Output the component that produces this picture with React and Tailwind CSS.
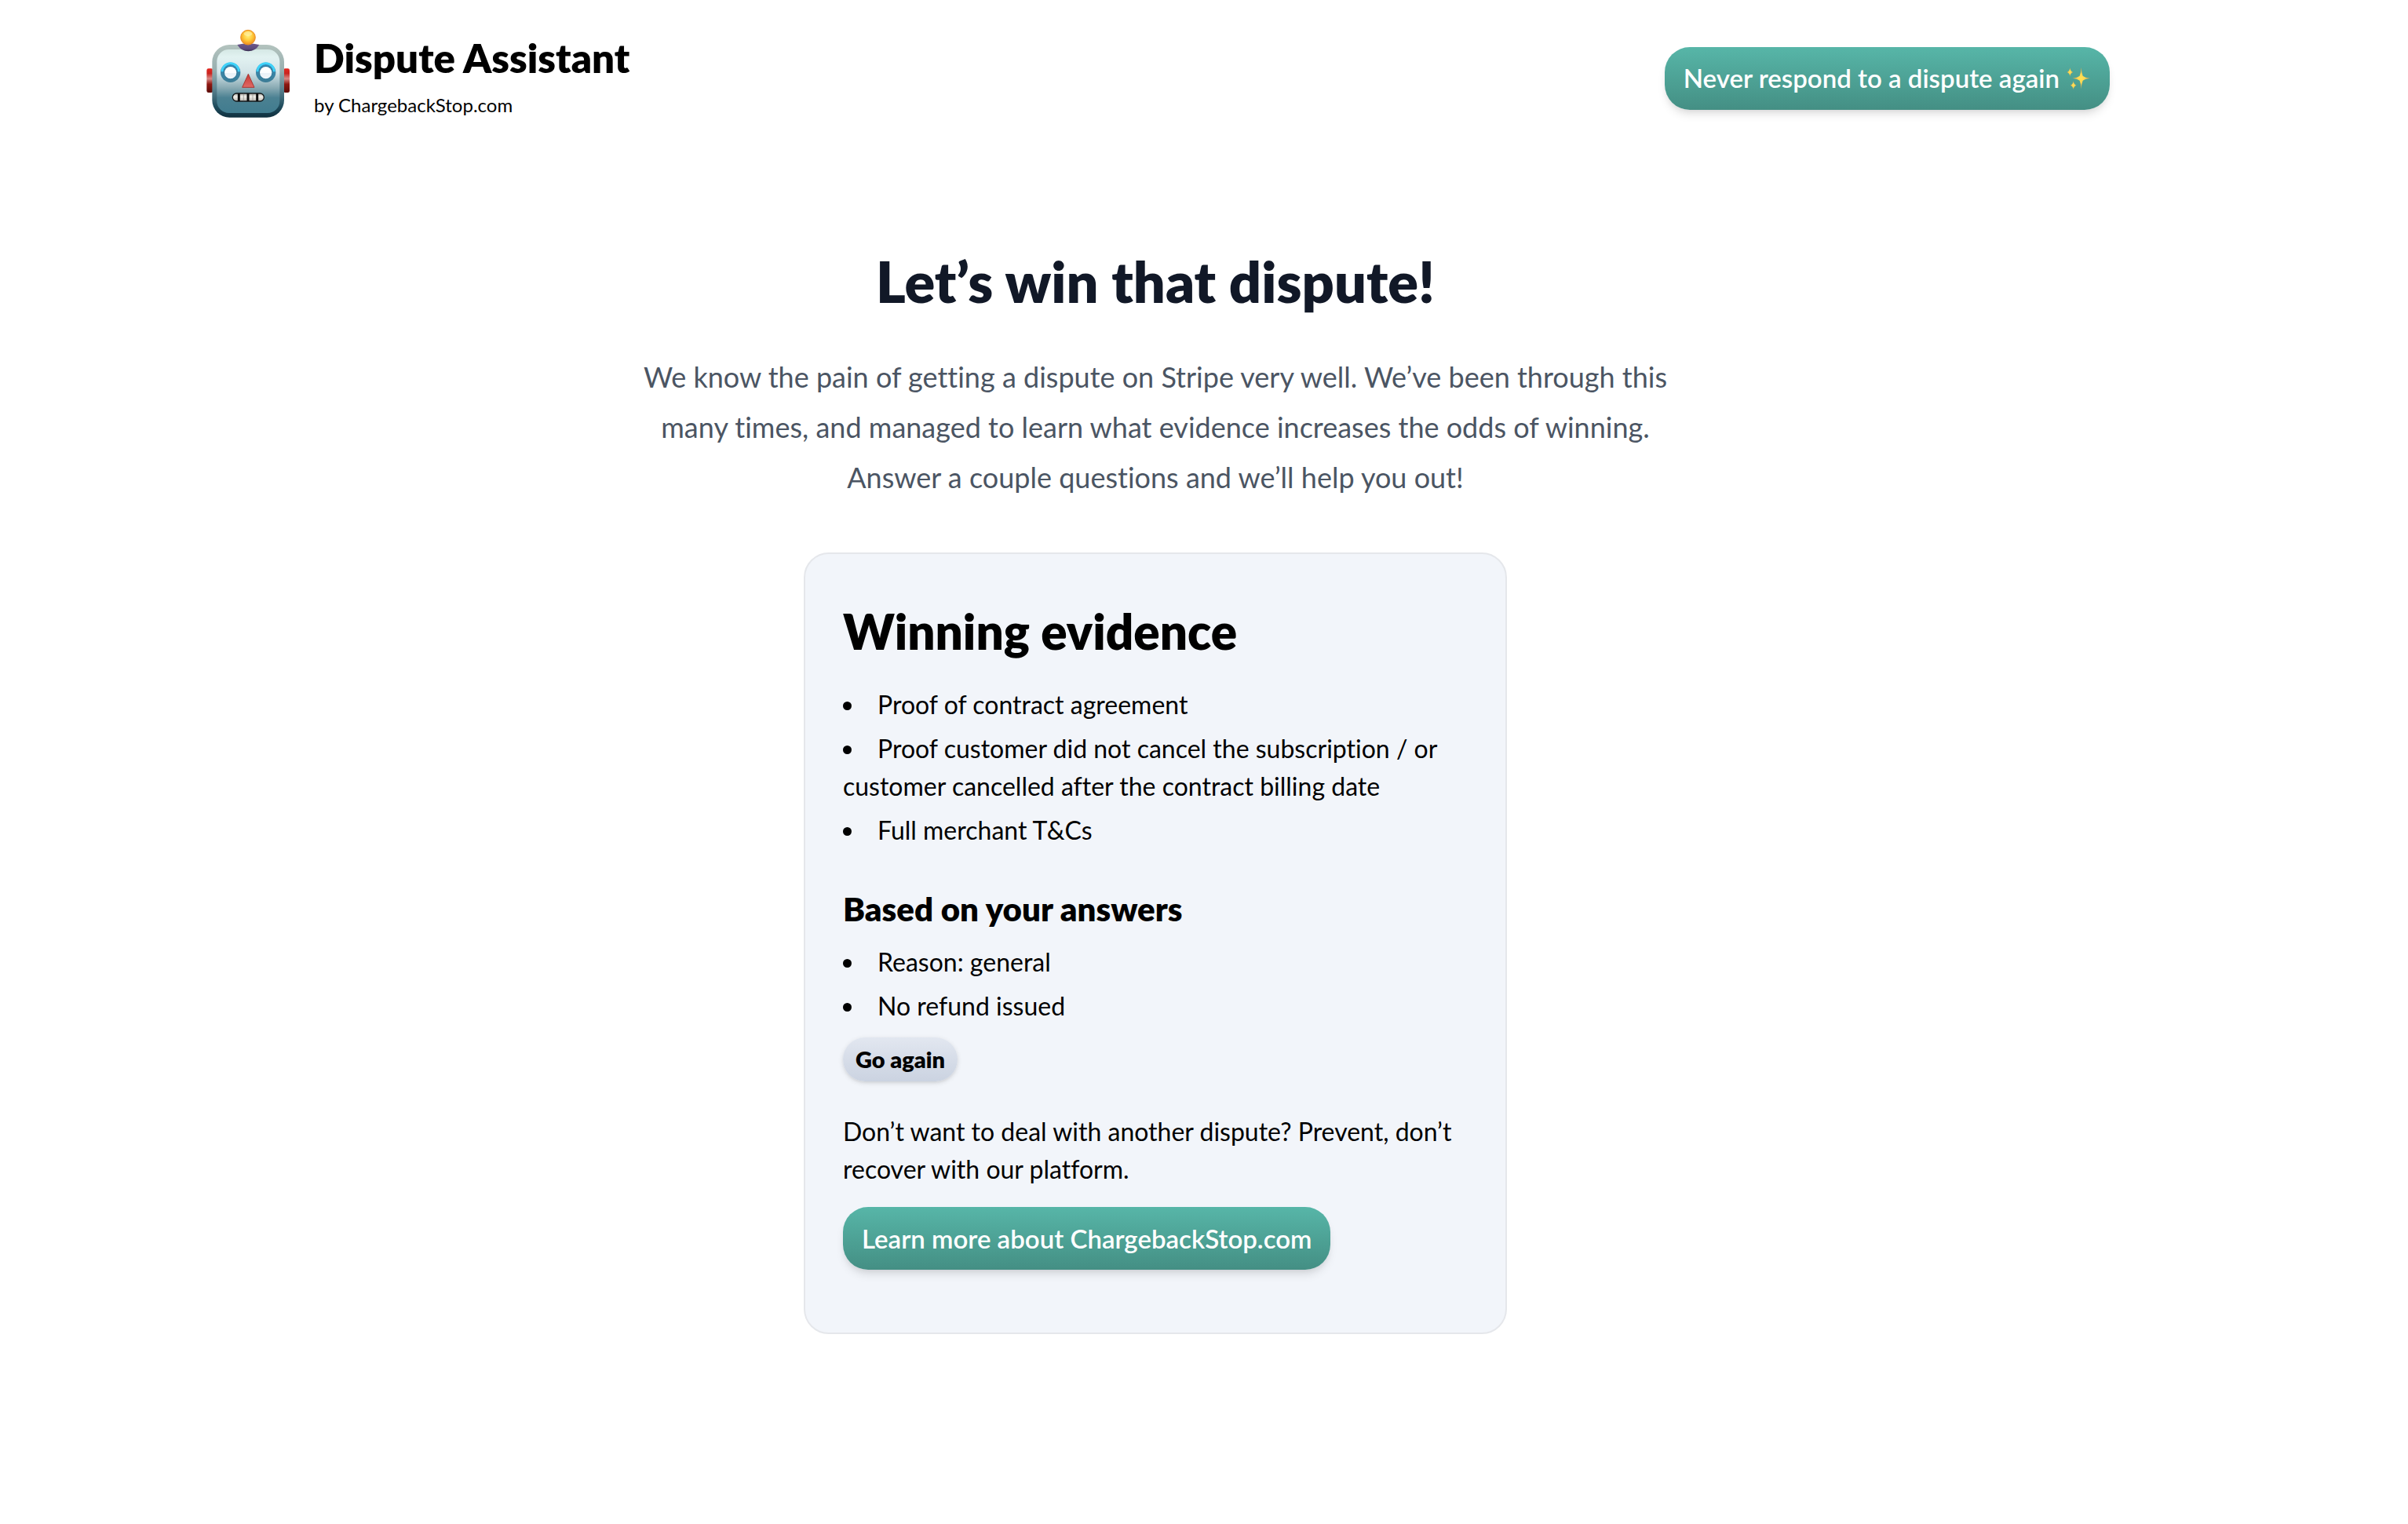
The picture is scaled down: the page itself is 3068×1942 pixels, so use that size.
import React from 'react';

const RobotLogo = () => (
  <svg viewBox="18 48 360 360" className="w-[120px] h-[120px] shrink-0" aria-hidden="true">
    <defs>
      <linearGradient id="shell" x1="0" y1="0" x2="0" y2="1">
        <stop offset="0" stopColor="#b3c3be" />
        <stop offset="0.35" stopColor="#98afb0" />
        <stop offset="0.6" stopColor="#5c8491" />
        <stop offset="0.85" stopColor="#1f4c5d" />
        <stop offset="1" stopColor="#0f2f3e" />
      </linearGradient>
      <linearGradient id="face" x1="0" y1="0" x2="0" y2="1">
        <stop offset="0" stopColor="#d5e8e5" />
        <stop offset="0.12" stopColor="#e2f2f1" />
        <stop offset="0.36" stopColor="#d3e4e8" />
        <stop offset="0.6" stopColor="#8aabb4" />
        <stop offset="0.76" stopColor="#4b8192" />
        <stop offset="1" stopColor="#417c8f" />
      </linearGradient>
      <radialGradient id="bulb" cx="0.5" cy="0.4" r="0.6">
        <stop offset="0" stopColor="#fff07a" />
        <stop offset="0.5" stopColor="#ffcb3c" />
        <stop offset="1" stopColor="#ef8d1c" />
      </radialGradient>
      <linearGradient id="cap" x1="0" y1="0" x2="0" y2="1">
        <stop offset="0" stopColor="#6d5a8d" />
        <stop offset="0.7" stopColor="#5b4a7a" />
        <stop offset="1" stopColor="#352a4d" />
      </linearGradient>
      <linearGradient id="ear" x1="0" y1="0" x2="0" y2="1">
        <stop offset="0" stopColor="#e3261f" />
        <stop offset="0.2" stopColor="#c9241f" />
        <stop offset="0.42" stopColor="#d88a86" />
        <stop offset="0.65" stopColor="#8f1711" />
        <stop offset="1" stopColor="#5b0c07" />
      </linearGradient>
      <linearGradient id="ring" x1="0" y1="0" x2="0" y2="1">
        <stop offset="0" stopColor="#2f8fc0" />
        <stop offset="0.48" stopColor="#3a86a8" />
        <stop offset="1" stopColor="#3d7c95" />
      </linearGradient>
      <linearGradient id="lens" x1="0" y1="0" x2="0" y2="1">
        <stop offset="0" stopColor="#ffffff" />
        <stop offset="0.5" stopColor="#fbfdff" />
        <stop offset="0.55" stopColor="#eaf2f8" />
        <stop offset="1" stopColor="#f1f6fa" />
      </linearGradient>
      <linearGradient id="nose" x1="0" y1="0" x2="0" y2="1">
        <stop offset="0" stopColor="#c73732" />
        <stop offset="1" stopColor="#e06a66" />
      </linearGradient>
      <linearGradient id="teeth" x1="0" y1="0" x2="0" y2="1">
        <stop offset="0" stopColor="#a5a39d" />
        <stop offset="0.4" stopColor="#f2f0ea" />
        <stop offset="1" stopColor="#b8b5ae" />
      </linearGradient>
    </defs>
    <rect x="40" y="202" width="24" height="92" rx="7" fill="url(#ear)" />
    <rect x="333" y="202" width="24" height="92" rx="7" fill="url(#ear)" />
    <rect x="61" y="111" width="275" height="278" rx="66" fill="url(#shell)" />
    <rect x="79" y="129" width="240" height="243" rx="46" fill="url(#face)" />
    <path d="M157 111 Q198 101 241 111 Q226 136 199 136 Q172 136 157 111Z" fill="url(#cap)" />
    <circle cx="198" cy="83" r="28" fill="url(#bulb)" stroke="#ec8f22" strokeWidth="3" />
    <ellipse cx="198" cy="69" rx="16" ry="9" fill="#fff3b0" opacity="0.6" />
    {[131, 266].map((cx) => (
      <g key={cx}>
        <circle cx={cx} cy="217" r="38" fill="url(#ring)" />
        <path d={`M${cx - 32} 214 A32 32 0 0 1 ${cx + 32} 214`} fill="none" stroke="#3fd3fa" strokeWidth="8" />
        <circle cx={cx} cy="218" r="26" fill="#33799a" />
        <circle cx={cx} cy="218" r="23" fill="url(#lens)" />
      </g>
    ))}
    <path d="M199 223 L222 274 H176Z" fill="url(#nose)" stroke="#a83834" strokeWidth="3" strokeLinejoin="round" />
    <rect x="139" y="297" width="120" height="30" rx="15" fill="url(#teeth)" stroke="#15191b" strokeWidth="4" />
    <path d="M163 297V327M198 297V327M233 297V327" stroke="#0d0d0d" strokeWidth="9" />
    <path d="M181 299V325M216 299V325" stroke="#8b8983" strokeWidth="2" />
  </svg>
);

const Sparkles = () => (
  <svg viewBox="38 22 96 96" className="w-8 h-8 shrink-0" aria-hidden="true">
    <defs>
      <radialGradient id="spark">
        <stop offset="0" stopColor="#ffe352" />
        <stop offset="0.4" stopColor="#fcd654" />
        <stop offset="1" stopColor="#d99a45" />
      </radialGradient>
    </defs>
    <g fill="url(#spark)">
      <path d="M97 27 Q98 48 103 60 Q112 67 131 69 Q112 71 103 78 Q98 90 97 111 Q96 90 91 78 Q82 71 63 69 Q82 67 91 60 Q96 48 97 27Z" />
      <path d="M54 28 Q55 43 66 46 Q55 49 54 63 Q53 49 42 46 Q53 43 54 28Z" />
      <path d="M67 79 Q68 93 79 96 Q68 99 67 113 Q66 99 55 96 Q66 93 67 79Z" />
    </g>
  </svg>
);

const CtaLink = ({ href, children }) => (
  <a
    href={href}
    className="inline-flex items-center gap-2 h-20 px-6 rounded-[32px] bg-gradient-to-b from-[#57b6a8] to-[#448f84] text-white text-[33px] font-semibold whitespace-nowrap shadow-[0_8px_12px_-2px_rgba(0,0,0,0.1),0_4px_8px_-4px_rgba(0,0,0,0.1)]"
  >
    {children}
  </a>
);

const evidence = [
  'Proof of contract agreement',
  'Proof customer did not cancel the subscription / or customer cancelled after the contract billing date',
  'Full merchant T&Cs',
];

const answers = ['Reason: general', 'No refund issued'];

const BulletList = ({ items }) => (
  <ul className="list-disc list-inside space-y-2">
    {items.map((item) => (
      <li key={item}>{item}</li>
    ))}
  </ul>
);

export default function App() {
  return (
    <div className="min-h-screen bg-white pr-[124px] pb-20 font-['Lato',sans-serif] [font-variant-ligatures:none] text-black">
      <div className="max-w-[2560px] mx-auto px-16">
        <header className="flex items-start justify-between pt-9">
          <div className="flex items-center gap-6">
            <RobotLogo />
            <div className="flex flex-col gap-3">
              <p className="text-[51px] leading-[64px] font-extrabold">Dispute Assistant</p>
              <p className="text-2xl leading-8">by ChargebackStop.com</p>
            </div>
          </div>
          <div className="pt-6">
            <CtaLink href="#prevent">
              Never respond to a dispute again
              <Sparkles />
            </CtaLink>
          </div>
        </header>

        <main className="pt-40">
          <div className="max-w-[1344px] mx-auto text-center">
            <h1 className="text-7xl leading-[84px] font-extrabold text-[#111827]">Let’s win that dispute!</h1>
            <p className="mt-12 text-4xl leading-[64px] text-[#4b5563]">
              We know the pain of getting a dispute on Stripe very well. We’ve been through this many times, and managed to
              learn what evidence increases the odds of winning. Answer a couple questions and we’ll help you out!
            </p>
          </div>

          <section className="max-w-4xl mx-auto mt-16 px-12 pt-3 pb-20 rounded-[32px] border-2 border-gray-200 bg-[#f2f5fa] text-[32px] leading-[48px]">
            <h2 className="pt-12 text-[62px] leading-[76px] font-extrabold">Winning evidence</h2>
            <div className="mt-8">
              <BulletList items={evidence} />
            </div>
            <h3 className="mt-12 mb-4 text-[42px] leading-[56px] font-extrabold">Based on your answers</h3>
            <BulletList items={answers} />
            <button
              type="button"
              className="block mt-4 h-14 px-4 rounded-[28px] bg-gradient-to-b from-[#e2e7f0] to-[#cbd3e1] text-[29px] leading-[40px] font-extrabold shadow-[0_2px_6px_rgba(0,0,0,0.12),0_2px_4px_-2px_rgba(0,0,0,0.1)]"
            >
              Go again
            </button>
            <p className="mt-10 mb-6">
              Don’t want to deal with another dispute? Prevent, don’t recover with our platform.
            </p>
            <CtaLink href="#learn-more">Learn more about ChargebackStop.com</CtaLink>
          </section>
        </main>
      </div>
    </div>
  );
}
